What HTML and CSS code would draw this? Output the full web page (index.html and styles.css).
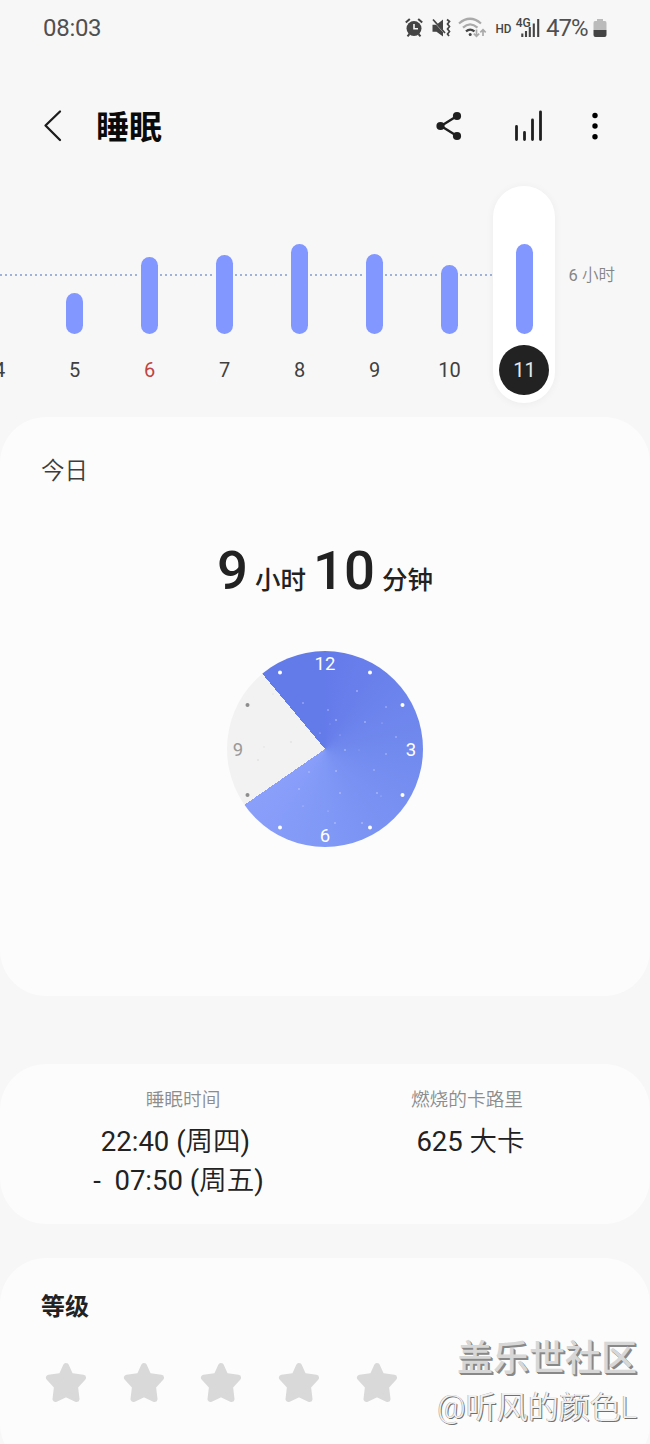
FILE: index.html
```html
<!DOCTYPE html>
<html lang="zh-CN">
<head>
<meta charset="utf-8">
<title>睡眠</title>
<link rel="stylesheet" href="styles.css">
</head>
<body>
<svg class="defs" width="0" height="0">
  <symbol id="star" viewBox="0 0 42 42"><path d="M21 4L25.500 14L38 15.800L30 24.500L31.500 37L21 32L10.500 37L12 24.500L4 15.800L16.500 14Z" fill="#d9d9d9" stroke="#d9d9d9" stroke-width="6" stroke-linejoin="round"/></symbol>
</svg>
<header class="status">
  <span class="time">08:03</span>
  <svg class="status-icons" width="142" height="26" viewBox="0 0 142 26">
    <g fill="#444" stroke="#444">
      <circle cx="10" cy="13.500" r="7.500" stroke="none"/>
      <path d="M1.800 7.600L5.800 4M18.200 7.600L14.200 4M5.500 19L3.500 21.300M14.500 19L16.500 21.300" fill="none" stroke-width="2"/>
      <path d="M10 9V13.800H14" fill="none" stroke="#f7f7f7" stroke-width="1.600"/>
      <path d="M28.500 9.800H32.500L39 4.500V21.500L32.500 16.800H28.500Z" stroke="none"/>
      <path d="M27.500 3.500L42 19.500" stroke="#f7f7f7" stroke-width="1.500"/>
      <path d="M29 4.500L41 18" stroke-width="1.700"/>
      <path d="M43 4.500L45.500 6.500L43.500 9L45.500 11.500L43.500 14L45.500 16.500L43.500 19L45 21" fill="none" stroke-width="1.700"/>
    </g>
    <g fill="none" stroke-width="2.200">
      <path d="M55 8.500Q66 -1 77 8.500M59 12.600Q66 6 73.500 12.600" stroke="#aaa"/>
      <path d="M62 16.400Q66 12.700 70.500 16.400" stroke="#444"/>
      <circle cx="66.200" cy="19.500" r="1.500" fill="#444" stroke="none"/>
      <path d="M72.500 14.500V21M69.800 18.700L72.500 21.300L75.200 18.700M79 21V15M76.300 17.300L79 14.700L81.700 17.300" stroke="#aaa" stroke-width="1.700"/>
    </g>
    <text x="91.500" y="17.700" font-size="13" font-weight="500" textLength="16" lengthAdjust="spacingAndGlyphs">HD</text>
    <path d="M118.300 22V18.500M122 22V16M125.800 22V12M129.800 22V8.500M134.200 22V4" stroke="#444" stroke-width="2.100"/>
    <text x="111.800" y="12" font-size="12.500" font-weight="500" textLength="15" lengthAdjust="spacingAndGlyphs">4G</text>
  </svg>
  <span class="percent">47%</span>
  <svg class="battery" width="14" height="20" viewBox="0 0 14 20"><path d="M4 1H10V3H12Q13.500 3 13.500 5V12H.500V5Q.500 3 2 3H4Z" fill="#bbb"/><path d="M.500 12H13.500V17Q13.500 19 11.500 19H2.500Q.500 19 .500 17Z" fill="#444"/></svg>
</header>
<nav class="toolbar">
  <svg width="20" height="34" viewBox="0 0 20 34"><path d="M17 2.500L2.500 16.500L17 31" fill="none" stroke="#1d1d1d" stroke-width="2.300" stroke-linecap="round" stroke-linejoin="round"/></svg>
  <h1 class="title">睡眠</h1>
  <svg class="share" width="28" height="30" viewBox="0 0 28 30"><path d="M22 5L6 15L22 25" fill="none" stroke="#1f1f1f" stroke-width="2.400"/><g fill="#1f1f1f"><circle cx="22" cy="5" r="4.100"/><circle cx="5.500" cy="15" r="4.100"/><circle cx="22" cy="25" r="4.100"/></g></svg>
  <svg class="trend" width="32" height="34" viewBox="0 0 32 34"><path d="M3.500 17.500V30.500M11.500 23.500V30.500M19.500 11V30.500M27.500 2.800V30.500" stroke="#1f1f1f" stroke-width="2.800" stroke-linecap="round"/></svg>
  <svg class="more" width="8" height="30" viewBox="0 0 8 30"><circle cx="4" cy="4.500" r="2.700"/><circle cx="4" cy="15" r="2.700"/><circle cx="4" cy="25.700" r="2.700"/></svg>
</nav>
<section class="chart">
  <div class="goal-line"></div>
  <div class="days">
    <div class="day"><span class="date">4</span></div>
    <div class="day"><i class="bar" style="height:41px"></i><span class="date">5</span></div>
    <div class="day"><i class="bar" style="height:77px"></i><span class="date holiday">6</span></div>
    <div class="day"><i class="bar" style="height:79px"></i><span class="date">7</span></div>
    <div class="day"><i class="bar" style="height:90px"></i><span class="date">8</span></div>
    <div class="day"><i class="bar" style="height:80.500px"></i><span class="date">9</span></div>
    <div class="day"><i class="bar" style="height:69px"></i><span class="date">10</span></div>
    <div class="day selected"><i class="bar" style="height:90px"></i><span class="date">11</span></div>
  </div>
  <span class="goal">6 <span class="unit">小时</span></span>
</section>
<main>
  <section class="card today">
    <h2 class="today-label">今日</h2>
    <p class="duration"><b>9</b><span>小时</span><b class="minutes">10</b><span>分钟</span></p>
    <div class="clock">
      <svg width="198" height="198" viewBox="-99 -99 198 198">
        <g fill="#8d8d8d"><circle cx="-77.500" cy="-45" r="2"/><circle cx="-77.500" cy="45" r="2"/></g>
        <g fill="#fff"><circle cx="-45" cy="-77.500" r="2"/><circle cx="45" cy="-77.500" r="2"/><circle cx="77.500" cy="-45" r="2"/><circle cx="77.500" cy="45" r="2"/><circle cx="45" cy="77.500" r="2"/><circle cx="-45" cy="77.500" r="2"/></g>
        <g fill="#c5ceff"><circle cx="32" cy="-59" r=".8"/><circle cx="61" cy="-43" r=".7"/><circle cx="3" cy="-40" r=".7"/><circle cx="-22" cy="-47" r=".7"/><circle cx="11" cy="-30" r=".8"/><circle cx="40" cy="-28" r=".8"/><circle cx="57" cy="-27" r=".5"/><circle cx="71" cy="-13" r=".7"/><circle cx="20" cy="0" r=".8"/><circle cx="34" cy="0" r=".4"/><circle cx="61" cy="4" r=".7"/><circle cx="11" cy="21" r=".8"/><circle cx="49" cy="20" r=".7"/><circle cx="-16" cy="22" r=".7"/><circle cx="-26" cy="39" r=".8"/><circle cx="15" cy="43" r=".8"/><circle cx="52" cy="43" r=".8"/><circle cx="56" cy="46" r=".5"/><circle cx="-22" cy="56" r=".6"/><circle cx="3" cy="61" r=".6"/><circle cx="10" cy="73" r=".8"/><circle cx="37" cy="73" r=".8"/><circle cx="-5" cy="-17" r=".6"/><circle cx="15" cy="-15" r=".5"/><circle cx="5" cy="-26" r=".4"/></g>
        <g fill="#e2e2e2"><circle cx="-52" cy="-56" r=".8"/><circle cx="-34" cy="-8" r=".9"/><circle cx="-61" cy="-3" r=".8"/><circle cx="-67" cy="10" r=".9"/></g>
        <g class="numerals"><text x="0" y="-80.500">12</text><text x="86" y="6">3</text><text x="0" y="92">6</text><text class="off" x="-87" y="6">9</text></g>
      </svg>
    </div>
  </section>
  <section class="card stats">
    <div class="stat period"><h3>睡眠时间</h3><p>22:40 (<span class="unit">周四</span>)</p><p class="until">-&nbsp; 07:50 (<span class="unit">周五</span>)</p></div>
    <div class="stat calories"><h3>燃烧的卡路里</h3><p>625 <span class="unit">大卡</span></p></div>
  </section>
  <section class="card rating">
    <h2>等级</h2>
    <div class="stars">
      <svg><use href="#star"/></svg><svg><use href="#star"/></svg><svg><use href="#star"/></svg><svg><use href="#star"/></svg><svg><use href="#star"/></svg>
    </div>
  </section>
</main>
<aside class="watermark"><div class="community">盖乐世社区</div><div class="author">@听风的颜色L</div></aside>
</body>
</html>
```

FILE: styles.css
```css
* { box-sizing: border-box; margin: 0; padding: 0; }
body { position: relative; width: 650px; height: 1444px; overflow: hidden; background: #f7f7f7; color: #222; font-family: Roboto, "Noto Sans CJK SC", sans-serif; }
svg { display: block; flex: none; }
.defs { position: absolute; }
.unit { font-weight: 350; }

.status { display: flex; align-items: center; height: 56px; padding-left: 43px; color: #505050; font-weight: 400; font-size: 24px; }
.status span { line-height: 28px; }
.time { width: 361px; letter-spacing: -.3px; }
.status-icons { fill: #444; }
.percent { width: 47px; letter-spacing: -1px; }
.battery { margin-top: -1px; }

.toolbar { display: flex; align-items: center; height: 140px; padding-left: 43px; }
.title { width: 303px; margin: 3px 0 0 33px; font-size: 33px; line-height: 48px; color: #0a0a0a; }
.share { margin: -1px 0 0 36px; }
.trend { margin: -1px 0 0 50px; }
.more { margin: -1px 0 0 46px; }

.chart { position: relative; display: flex; height: 221px; margin-top: -10px; }
.days { position: relative; display: grid; grid-template-columns: repeat(8, 75px); margin-left: -38px; height: 217px; flex: none; }
.day { display: flex; flex-direction: column; align-items: center; justify-content: flex-end; padding-bottom: 8px; }
.bar { width: 17px; border-radius: 9px; background: #8297ff; margin-bottom: 10.5px; box-shadow: 0 0 0 1px #f7f7f7; }
.date { width: 50px; height: 50.5px; border-radius: 50%; font-size: 20px; line-height: 50px; text-align: center; color: #404040; }
.holiday { color: #c0443f; }
.selected { width: 62px; margin-left: 6px; border-radius: 31px; background: #fff; box-shadow: 0 1px 8px #0000000c; }
.selected .date { background: #222; color: #e8e8e8; padding-left: 1px; }
.selected .bar { box-shadow: none; }
.goal-line { position: absolute; left: 0; top: 88px; width: 493px; height: 2px; background: repeating-linear-gradient(90deg, #9fb2d9 0 2px, transparent 2px 5px); }
.goal { margin: 79px 0 0 6.5px; font-size: 16.500px; line-height: 22px; color: #858585; }

.card { background: #fcfcfc; border-radius: 46px; }
.today { height: 579px; margin-top: 10px; padding-top: 37px; }
.today-label { margin-left: 41px; font-weight: 350; font-size: 23.500px; line-height: 34px; color: #3c3c3c; }
.duration { display: flex; justify-content: center; align-items: baseline; height: 80px; margin-top: 42px; font-size: 25.500px; font-weight: 500; line-height: 80px; }
.duration b { font-size: 54.500px; font-weight: 500; margin-right: 7px; }
.duration .minutes { margin-left: 7px; margin-right: 7px; }
.clock { width: 196px; height: 196px; margin: 42px 0 0 227px; border-radius: 50%; background: conic-gradient(#647aea, #718aee 90deg, #8098f6 180deg, #8a9ffa 235.300deg, #f2f2f2 235.300deg 320.200deg, #637be9 320.200deg); }
.clock svg { margin: -1px; }
.numerals { font-size: 18.500px; text-anchor: middle; fill: #fff; }
.numerals .off { fill: #999; }

.stats { display: flex; height: 160px; margin-top: 68px; padding-top: 21px; }
.stat { text-align: center; }
.stat h3 { font-size: 18.700px; font-weight: 350; line-height: 30px; color: #8c8c8c; }
.stat p { font-size: 27.500px; line-height: 39px; white-space: nowrap; margin-top: 7px; }
.stat p + p { margin-top: 0; }
.period { width: 366px; }
.period p { padding-right: 15px; }
.period .until { padding-right: 9px; }
.calories { width: 202px; }
.calories p { padding-left: 7px; }

.rating { height: 212px; margin-top: 34px; padding: 31px 41px; }
.rating h2 { font-size: 24px; line-height: 36px; font-weight: 600; }
.stars { display: flex; gap: 35.700px; margin: 37px 0 0 4px; }
.stars svg { width: 42px; height: 42px; }

.watermark { position: absolute; right: 13px; bottom: 12px; text-align: right; white-space: nowrap; color: #d7d7d7; text-shadow: 1px 1px #888, 2px 2px #888; }
.community { font-size: 36px; font-weight: 500; line-height: 49px; }
.author { font-size: 31px; font-weight: 350; line-height: 48px; color: #f1f1f1; text-shadow: 1px 1px #707070, -.5px -.5px #999; }
```
